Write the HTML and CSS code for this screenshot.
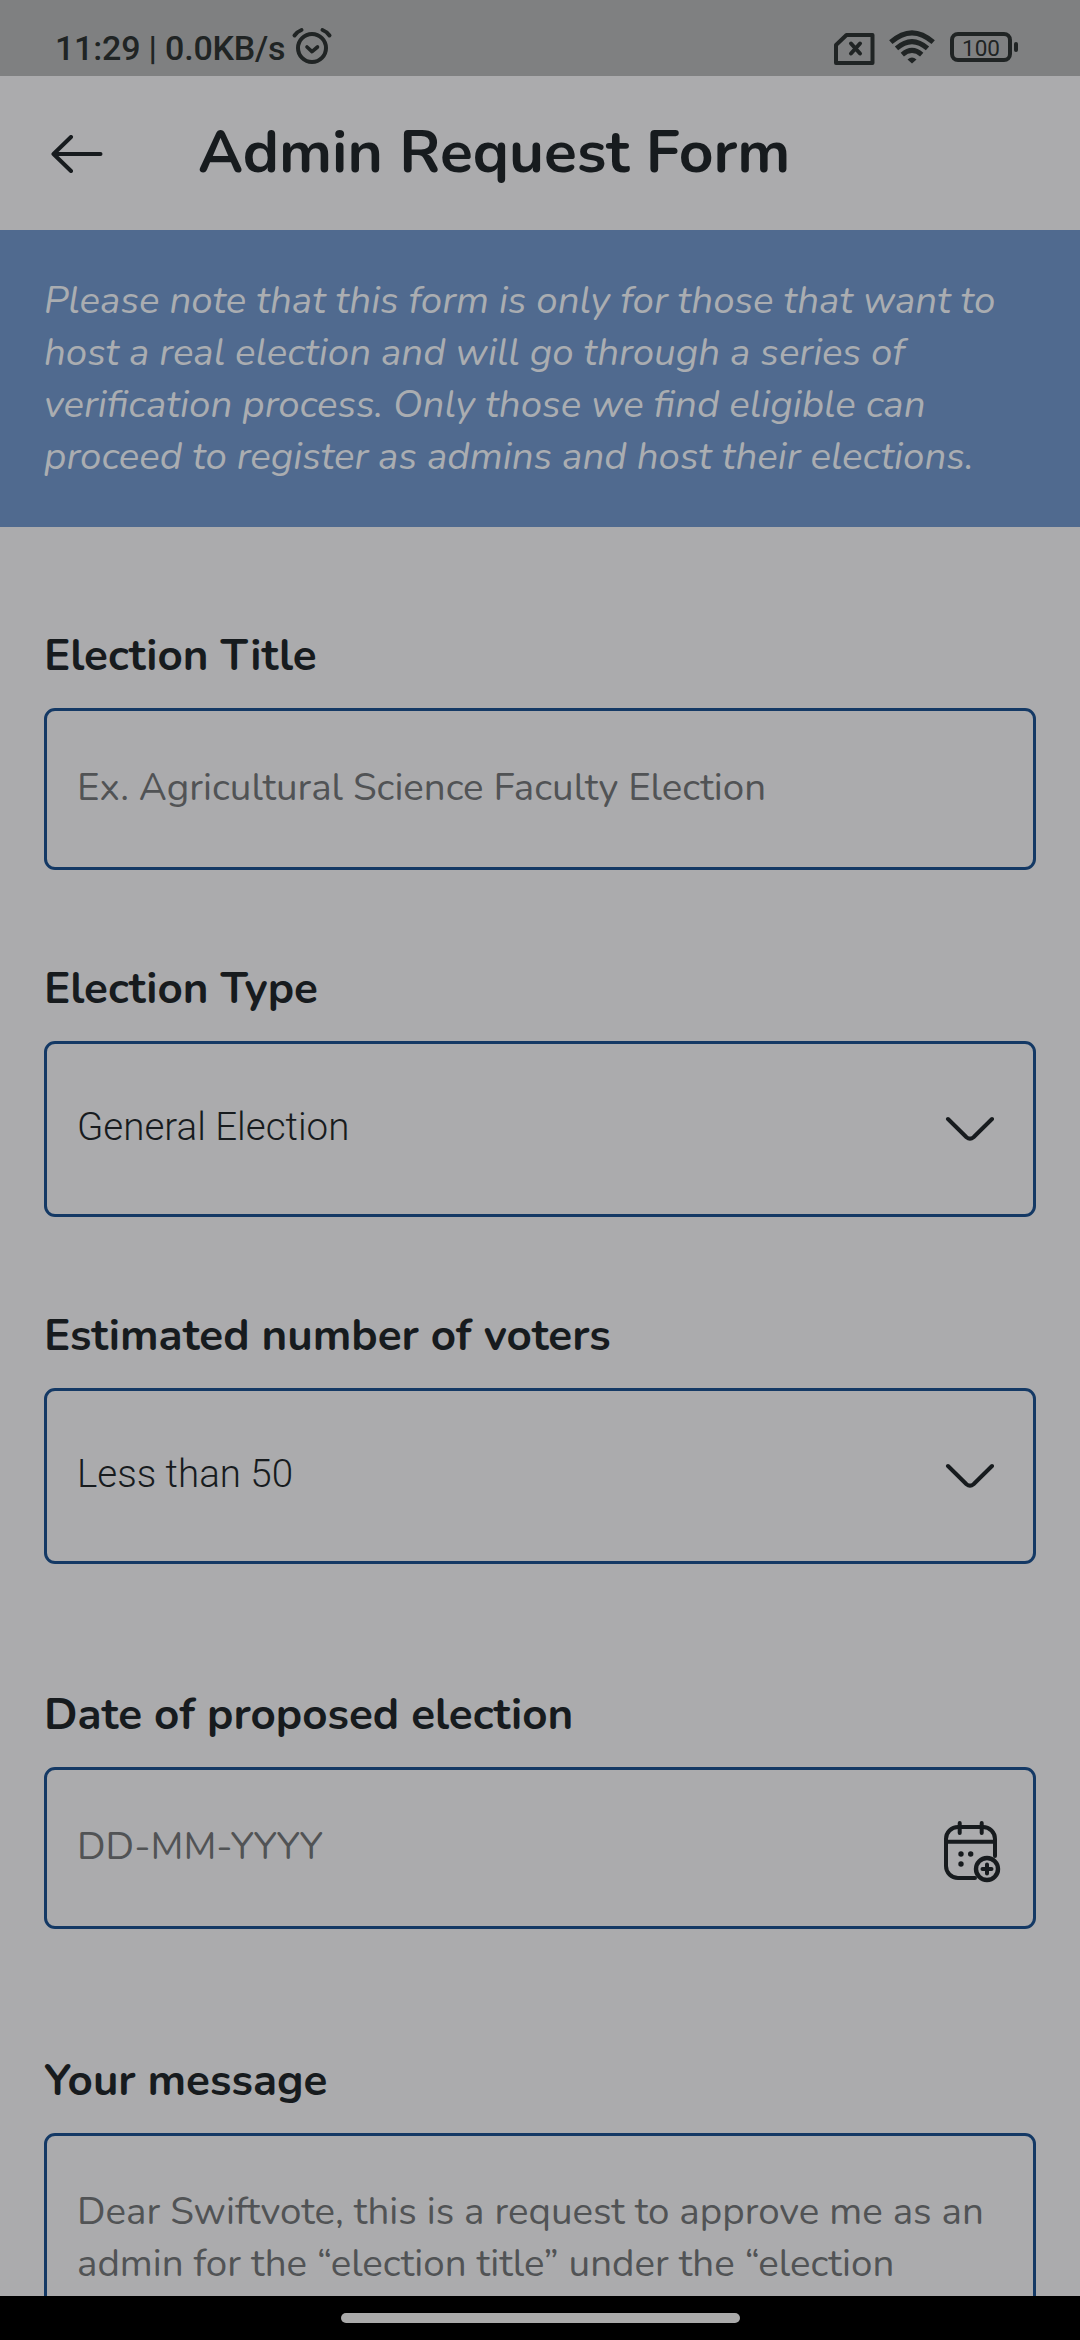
FILE: index.html
```html
<!DOCTYPE html>
<html lang="en">
<head>
<meta charset="utf-8">
<title>Admin Request Form</title>
<link rel="stylesheet" href="styles.css">
</head>
<body>
<div class="screen">
  <div class="status">
    <span class="status-text">11:29 | 0.0KB/s</span>
    <svg class="alarm" width="42" height="40" viewBox="0 0 42 40" fill="none" stroke="#202424" stroke-linecap="round" stroke-linejoin="round">
      <circle cx="21" cy="22" r="14" stroke-width="4"/>
      <path d="M16 21l5 4.600 5.500-4.600" stroke-width="3.600"/>
      <path d="M3.500 9.500Q6.500 5.500 10.500 4M31.500 4Q35.500 5.500 38.500 9.500" stroke-width="4"/>
    </svg>
    <span class="status-gap"></span>
    <svg class="sim" width="41" height="32" viewBox="0 0 41 32" fill="none" stroke="#202424" stroke-linecap="round" stroke-linejoin="round">
      <path d="M12.500 2H38.500V30H2V12z" stroke-width="4"/>
      <path d="M17 10.500l9 10M26 10.500l-9 10" stroke-width="4"/>
    </svg>
    <svg class="wifi" width="46" height="34" viewBox="0 0 46 34" fill="none" stroke="#202424" stroke-width="5">
      <path d="M1.800 12.200Q23-6.600 44.200 12.200"/>
      <path d="M7.500 18.400Q23 4.800 38.500 18.400"/>
      <path d="M13.300 24.600Q23 16.200 32.700 24.600"/>
      <path d="M23 33.500l-4.500-4q4.500-4 9 0z" fill="#202424" stroke="none"/>
    </svg>
    <div class="battery">100</div>
    <i class="battery-tip"></i>
  </div>

  <header class="header">
    <svg width="52" height="38" viewBox="0 0 52 38" fill="none" stroke="#171b1e" stroke-width="4" stroke-linecap="round" stroke-linejoin="round">
      <path d="M49.500 19H2.500M20 2L2.500 19 20 36"/>
    </svg>
    <h1>Admin Request Form</h1>
  </header>

  <p class="notice">Please note that this form is only for those that want to<br>host a real election and will go through a series of<br>verification process. Only those we find eligible can<br>proceed to register as admins and host their elections.</p>

  <main class="form">
    <section class="field">
      <h2>Election Title</h2>
      <div class="box text"><span>Ex. Agricultural Science Faculty Election</span></div>
    </section>
    <section class="field">
      <h2>Election Type</h2>
      <div class="box select"><span>General Election</span>
        <svg width="50" height="26" viewBox="0 0 50 26" fill="none" stroke="#171b1e" stroke-width="4" stroke-linecap="round" stroke-linejoin="round"><path d="M3 3L21.500 21.200Q25 24.200 28.500 21.200L47 3"/></svg>
      </div>
    </section>
    <section class="field">
      <h2>Estimated number of voters</h2>
      <div class="box select"><span>Less than 50</span>
        <svg width="50" height="26" viewBox="0 0 50 26" fill="none" stroke="#171b1e" stroke-width="4" stroke-linecap="round" stroke-linejoin="round"><path d="M3 3L21.500 21.200Q25 24.200 28.500 21.200L47 3"/></svg>
      </div>
    </section>
    <section class="field date">
      <h2>Date of proposed election</h2>
      <div class="box text"><span>DD-MM-YYYY</span>
        <svg class="calendar" width="58" height="62" viewBox="0 0 58 62" fill="none" stroke="#171b1e" stroke-width="4" stroke-linecap="round">
          <path d="M52 35V18A12 12 0 0 0 40 6H15A12 12 0 0 0 3 18V45A12 12 0 0 0 15 57H32M3 20.700H52"/>
          <path d="M16.700 2v10M38.700 2v10"/>
          <circle cx="44" cy="48" r="11" stroke-width="4.400"/>
          <path d="M39.500 48h9M44 43.500v9" stroke-width="4"/>
          <g fill="#171b1e" stroke="none"><circle cx="18" cy="33" r="2.700"/><circle cx="27.700" cy="33" r="2.700"/><circle cx="18" cy="43" r="2.700"/></g>
        </svg>
      </div>
    </section>
    <section class="field message">
      <h2>Your message</h2>
      <div class="box area"><span>Dear Swiftvote, this is a request to approve me as an<br>admin for the “election title” under the “election</span></div>
    </section>
  </main>

  <footer class="nav"><i></i></footer>
</div>
</body>
</html>
```
FILE: styles.css
```css
* { box-sizing: border-box; }
body { margin: 0; }
h1, h2, p { margin: 0; }
svg { display: block; flex: none; }

.screen {
  width: 1080px;
  height: 2340px;
  display: flex;
  flex-direction: column;
  overflow: hidden;
  background: #ababad;
  color: #171b1e;
  font-family: Nunito, Lato, sans-serif;
}

.status {
  flex: none;
  height: 76px;
  padding: 0 62px 0 55px;
  display: flex;
  align-items: flex-start;
  background: #7f8081;
  color: #202424;
  font-family: Roboto, sans-serif;
}
.status-text { margin-top: 28px; font-size: 34px; line-height: 40px; font-weight: 500; letter-spacing: -0.2px; }
.alarm { margin: 26px 0 0 6px; }
.status-gap { flex: 1; }
.sim { margin-top: 33px; }
.wifi { margin: 30px 0 0 14px; }
.battery {
  width: 62px;
  height: 30px;
  margin: 32px 0 0 15px;
  border: 4px solid #202424;
  border-radius: 8px;
  text-align: center;
  font-size: 22.500px;
  line-height: 24px;
}
.battery-tip { width: 4px; height: 10px; margin: 42px 0 0 2px; border-radius: 2px; background: #202424; }

.header {
  flex: none;
  height: 154px;
  padding: 1px 0 0 51px;
  display: flex;
  align-items: center;
}
.header h1 { margin-left: 95px; padding-bottom: 3px; font-size: 60.500px; line-height: 82px; font-weight: 700; }

.notice {
  flex: none;
  height: 297px;
  padding: 45px 44px 0;
  background: #506a8f;
  color: #aaadb1;
  font-size: 38.500px;
  line-height: 52px;
  font-style: italic;
  white-space: nowrap;
}

.form {
  flex: 1;
  min-height: 0;
  overflow: hidden;
  padding: 98px 44px 0;
  display: flex;
  flex-direction: column;
  gap: 88px;
}
.field { flex: none; }
.field h2 { height: 83px; padding-top: 1px; font-size: 44px; line-height: 60px; font-weight: 700; }
.date { margin-top: 32px; }
.message { margin-top: 33px; }

.box {
  display: flex;
  justify-content: space-between;
  border: 3px solid #143965;
  border-radius: 11px;
  padding-left: 30px;
  font-size: 38.500px;
  line-height: 52px;
  color: #515355;
  white-space: nowrap;
}
.text { height: 162px; padding-top: 51px; padding-right: 32px; }
.select {
  height: 176px;
  padding-top: 60px;
  padding-right: 38px;
  color: #171b1e;
  font-family: Roboto, sans-serif;
  font-weight: 300;
  line-height: 45px;
}
.select svg { margin-top: 12px; }
.area { height: 340px; padding-top: 50px; }

.nav { flex: none; height: 44px; background: #000; display: flex; justify-content: center; padding-top: 17px; }
.nav i { width: 399px; height: 10px; border-radius: 5px; background: #aaa; }
```
